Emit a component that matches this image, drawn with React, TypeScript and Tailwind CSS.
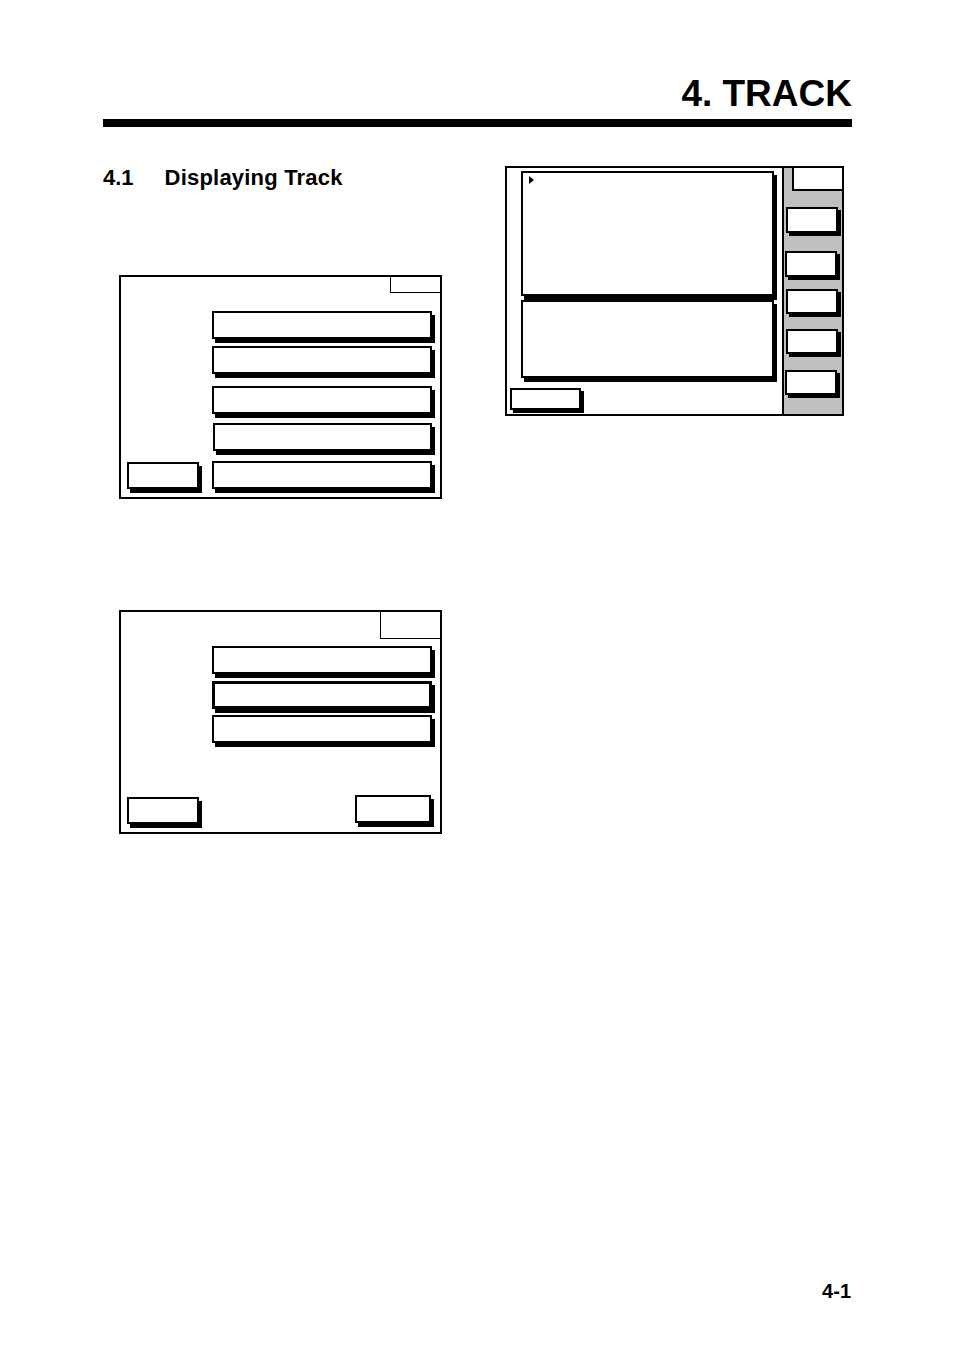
import React from 'react';

// a raised key with a solid drop shadow, as drawn in the manual's screen dumps
function Key({ className = '' }: { className?: string }) {
  return <div className={`bg-white border-2 border-black shadow-[3px_4px_0_0_#000] shrink-0 ${className}`} />;
}

function SideKey({ className = '' }: { className?: string }) {
  return <div className={`bg-white border-2 border-black shadow-[3px_3px_0_0_#000] w-[52px] shrink-0 ${className}`} />;
}

function MenuPanel() {
  return (
    <div className="ml-[16px] mt-[86px] w-[323px] h-[224px] border-2 border-black flex flex-col">
      <div className="flex justify-end">
        <div className="w-[50px] h-[16px] border-l border-b border-black" />
      </div>
      <Key className="mt-[18px] ml-[91px] w-[220px] h-[28px]" />
      <Key className="mt-[7px] ml-[91px] w-[220px] h-[28px]" />
      <Key className="mt-[12px] ml-[91px] w-[220px] h-[28px]" />
      <Key className="mt-[9px] ml-[92px] w-[219px] h-[28px]" />
      <div className="mt-[10px] pl-[6px] flex items-end">
        <Key className="w-[72px] h-[27px]" />
        <Key className="ml-[13px] w-[220px] h-[28px]" />
      </div>
    </div>
  );
}

function TrackPanel() {
  return (
    <div className="ml-[16px] mt-[111px] w-[323px] h-[224px] border-2 border-black flex flex-col">
      <div className="flex justify-end">
        <div className="w-[60px] h-[27px] border-l border-b border-black" />
      </div>
      <Key className="mt-[7px] ml-[91px] w-[220px] h-[28px]" />
      <div className="mt-[7px] ml-[91px] w-[220px] h-[28px] bg-white border-[3px] border-black shadow-[3px_4px_0_0_#000]" />
      <Key className="mt-[6px] ml-[91px] w-[220px] h-[28px]" />
      <div className="mt-auto pl-[6px] pr-[9px] pb-[8px] flex items-end justify-between">
        <Key className="w-[72px] h-[27px]" />
        <Key className="mb-[1px] w-[76px] h-[28px]" />
      </div>
    </div>
  );
}

function ListPanel() {
  return (
    <div className="w-[339px] h-[250px] border-2 border-black flex">
      <div className="flex-1 flex flex-col">
        <div className="relative ml-[14px] mt-[3px] w-[253px] h-[125px] bg-white border-2 border-black shadow-[3px_4px_0_0_#000]">
          <svg className="absolute left-[6px] top-[3px]" width="5" height="8" viewBox="0 0 5 8">
            <path d="M0 0 L5 4 L0 8 Z" fill="#000" />
          </svg>
        </div>
        <Key className="ml-[14px] mt-[4px] w-[253px] h-[78px]" />
        <div className="ml-[3px] mt-[10px] w-[71px] h-[22px] bg-white border-2 border-black shadow-[3px_3px_0_0_#000]" />
      </div>
      <div className="w-[60px] bg-[#c0c0c0] border-l-2 border-black flex flex-col">
        <div className="self-end w-[50px] h-[23px] bg-white border-l-2 border-b-2 border-black" />
        <SideKey className="mt-[16px] ml-[2px] h-[26px]" />
        <SideKey className="mt-[18px] ml-[1px] h-[26px]" />
        <SideKey className="mt-[12px] ml-[2px] h-[25px]" />
        <SideKey className="mt-[15px] ml-[2px] h-[25px]" />
        <SideKey className="mt-[16px] ml-[1px] h-[25px]" />
      </div>
    </div>
  );
}

export default function App() {
  return (
    <div className="w-[954px] h-[1349px] bg-white text-black flex flex-col font-['Liberation_Sans',Arial,sans-serif]">
      <div className="pl-[103px] pr-[102px] pt-[75px]">
        <h1 className="text-right text-[37px] leading-none font-bold">4. TRACK</h1>
        <div className="mt-[7px] h-[8px] bg-black" />
      </div>

      <div className="flex pl-[103px]">
        <div className="w-[402px] shrink-0 flex flex-col">
          <h2 className="mt-[40px] text-[22px] leading-none font-bold flex">
            <span>4.1</span>
            <span className="ml-[31px] tracking-[0.2px]">Displaying Track</span>
          </h2>
          <MenuPanel />
          <TrackPanel />
        </div>
        <div className="mt-[39px]">
          <ListPanel />
        </div>
      </div>

      <div className="mt-auto pb-[48px] pr-[103px] text-right text-[20px] leading-none font-bold">4-1</div>
    </div>
  );
}
